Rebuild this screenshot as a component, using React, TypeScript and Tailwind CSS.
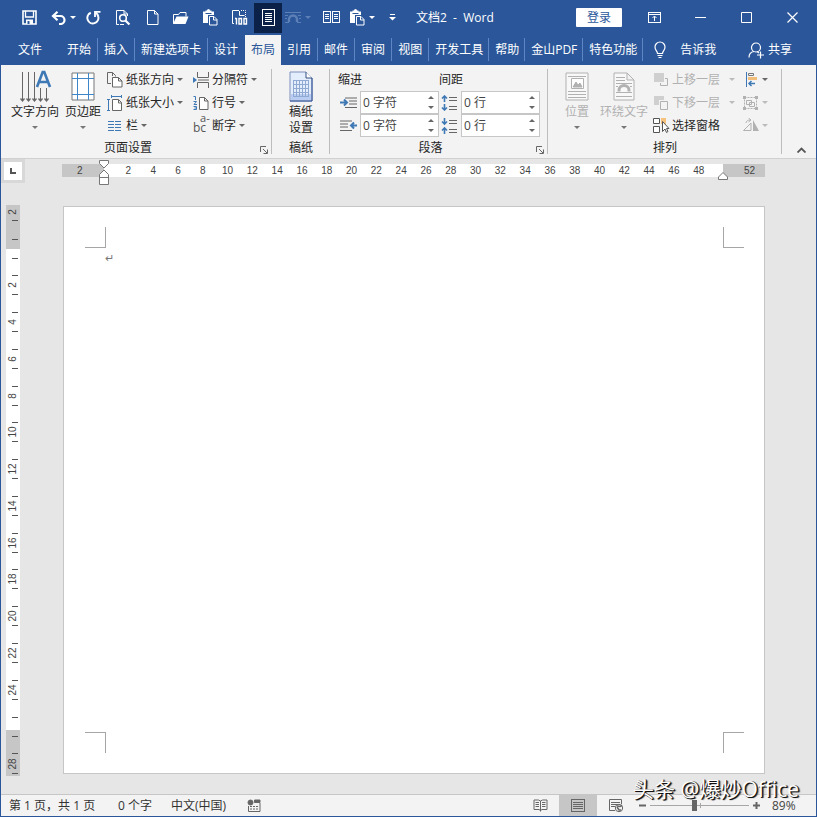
import React from "react";
import clsx from "clsx";

type Tab = { name: string; tight?: boolean; active?: boolean };

const TABS: Tab[] = [
  { name: "开始" },
  { name: "插入" },
  { name: "新建选项卡" },
  { name: "设计" },
  { name: "布局", active: true },
  { name: "引用" },
  { name: "邮件" },
  { name: "审阅" },
  { name: "视图" },
  { name: "开发工具", tight: true },
  { name: "帮助", tight: true },
  { name: "金山PDF", tight: true },
  { name: "特色功能", tight: true },
];

const H_NUMBERS = Array.from({ length: 24 }, (_, i) => (i + 1) * 2);
const V_NUMBERS = Array.from({ length: 12 }, (_, i) => (i + 1) * 2);

type IconProps = { w: number; h: number; className?: string; children: React.ReactNode };

const Icon = ({ w, h, className, children }: IconProps) => (
  <svg
    width={w}
    height={h}
    viewBox={`0 0 ${w} ${h}`}
    fill="none"
    stroke="currentColor"
    className={clsx("shrink-0", className)}
    aria-hidden="true"
  >
    {children}
  </svg>
);

const Caret = ({ className }: { className?: string }) => (
  <Icon w={6} h={3} className={className}>
    <path d="M0 0h6L3 3z" fill="currentColor" stroke="none" />
  </Icon>
);

/* ---------- quick access icons ---------- */

const SaveIcon = () => (
  <Icon w={15} h={15}>
    <path d="M1 1h13v13H1z" strokeWidth="1.6" />
    <path d="M3.500 1v6h8V1" strokeWidth="1.3" />
    <path d="M4 9.500h7V14H4z" fill="currentColor" stroke="none" />
    <path d="M5.500 11h2v3h-2z" fill="#2b579a" stroke="none" />
  </Icon>
);

const UndoIcon = () => (
  <Icon w={15} h={14}>
    <path d="M2 5h7.500a4 4 0 0 1 0 8H8" strokeWidth="2.200" />
    <path d="M6.500 .8L2 5l4.500 4.200" strokeWidth="2.200" />
  </Icon>
);

const RedoIcon = () => (
  <Icon w={15} h={15}>
    <path d="M4.800 2.800A5.500 5.500 0 1 0 12.200 6.500C12 5 11 3.500 9.500 2.500" strokeWidth="2" />
    <path d="M9 7V1.800h5.500" strokeWidth="1.800" />
  </Icon>
);

const PreviewIcon = () => (
  <Icon w={16} h={17}>
    <path d="M4 15.500H1.500V1.500H9l3.500 3.500v2M9 1.500V5h3.500M5 15.500h4" />
    <circle cx="8" cy="9" r="3.300" strokeWidth="1.600" />
    <path d="M10.400 11.500l4 4" strokeWidth="2.200" />
  </Icon>
);

const NewIcon = () => (
  <Icon w={12} h={15}>
    <path d="M.5.500h7l3.500 3.500v10.500H.500zM7.500.500V4H11" />
  </Icon>
);

const OpenIcon = () => (
  <Icon w={17} h={14}>
    <path d="M1.500 12.500V3.500h5l1.500-2h6v4" />
    <path d="M4.500 5.500H16.500L13.500 13H1z" fill="currentColor" stroke="none" />
  </Icon>
);

const PasteIcon = () => (
  <Icon w={16} h={17}>
    <path d="M1 2.500h2.500V1.500H5a1.500 1.500 0 0 1 3 0h1.500v1H12V6H6v8H1z" fill="currentColor" stroke="none" />
    <path d="M3.500 4.500h6" stroke="#2b579a" />
    <path d="M7.500 7.500h4.500l3 3v5.500H7.500zM11.500 7.500V11H15" />
  </Icon>
);

const HundredIcon = () => (
  <Icon w={17} h={17}>
    <path d="M3 14.500H1.500V1.500H8M8.500 2v4.500h5" />
    <path d="M10 1.500h4.500V8" strokeDasharray="1 1" />
    <path d="M5.500 9v6.500M4 9.500h1.500M8 9.500h2.500v5.500H8zM13 9.500h2.500v5.500H13z" strokeWidth="1.400" />
  </Icon>
);

const PageLinesIcon = () => (
  <Icon w={13} h={17}>
    <path d="M.5.500h12v16H.500zM3 4.500h7M3 6.500h7M3 8.500h7M3 10.500h7M3 12.500h7" shapeRendering="crispEdges" />
  </Icon>
);

const WrapSmallIcon = () => (
  <Icon w={16} h={13}>
    <path d="M0 1.500h16M0 4.500h3M13 4.500h3M0 7.500h2M14 7.500h2M0 11.500h4M12 11.500h4" />
    <path d="M4 11V8.500a4 4 0 0 1 8 0V11" strokeWidth="2.400" />
  </Icon>
);

const BookIcon = () => (
  <Icon w={17} h={13}>
    <path d="M.5.500h7v11H.500zM9.500.500h7v11h-7zM2 3.500h4M2 5.500h4M2 7.500h4M11 3.500h4M11 5.500h4M11 7.500h4" shapeRendering="crispEdges" />
  </Icon>
);

/* ---------- ribbon icons ---------- */

const TextDirectionIcon = () => (
  <Icon w={33} h={33} className="text-[#666]">
    <path d="M3.500 2v29M9.500 2v29M15.500 2v29M21.500 18v13M27.500 18v13" />
    <path d="M1.500 28.500l2 2.500 2-2.500M7.500 28.500l2 2.500 2-2.500M13.500 28.500l2 2.500 2-2.500M19.500 28.500l2 2.500 2-2.500M25.500 28.500l2 2.500 2-2.500" strokeWidth="1.300" />
    <path d="M18 17L23.700 2h1.600L31 17M20.500 12h8.500" stroke="#3e78b5" strokeWidth="2.600" />
  </Icon>
);

const MarginsIcon = () => (
  <Icon w={24} h={29}>
    <path d="M1 1h22v27H1z" fill="#fff" stroke="#777" />
    <path d="M6.500 1v27M17.500 1v27M1 6.500h22M1 22.500h22" stroke="#3e86c8" shapeRendering="crispEdges" />
  </Icon>
);

const OrientationIcon = () => (
  <Icon w={16} h={16} className="text-[#666]">
    <path d="M.5.500h5l3 3v1M5.500.500V4M.5.500v11H4" />
    <path d="M5.500 5.500h6l3.500 3.500v6H5.500zM11.500 5.500V9H15" fill="#fff" />
  </Icon>
);

const SizeIcon = () => (
  <Icon w={16} h={16} className="text-[#666]">
    <path d="M5.500 4.500h6l3 3v8h-9zM11.500 4.500V8h3" fill="#fff" />
    <path d="M4 1.500h11M4.500 0v3M14.500 0v3M1.500 4v11.500M0 4.500h3M0 15.500h3" stroke="#3e78b5" />
  </Icon>
);

const ColumnsIcon = () => (
  <Icon w={15} h={12} className="text-[#3e78b5]">
    <path d="M1 1.500h6M1 4.500h6M1 7.500h6M1 10.500h6M8 1.500h6M8 4.500h6M8 7.500h6M8 10.500h6" shapeRendering="crispEdges" />
  </Icon>
);

const BreaksIcon = () => (
  <Icon w={17} h={16} className="text-[#666]">
    <path d="M4.500 0v5.500h11V0M4.500 16v-5.500h11V16M5 8h11" />
    <path d="M0 5l4 3-4 3z" fill="#3e78b5" stroke="none" />
  </Icon>
);

const LineNumberIcon = () => (
  <Icon w={17} h={16} className="text-[#666]">
    <path d="M6.500 2.500h5l3.500 3.500v8.500H6.500zM11.500 2.500V6H15" fill="#fff" />
    <path d="M.5 1.500h2V5M.5 6.500h3L1 9.500h3M.5 11.500h3v3h-3M1.500 13h2" stroke="#3e78b5" />
  </Icon>
);

const HyphenIcon = () => (
  <span className="flex w-[17px] text-[12px] leading-[16px] text-[#555]" aria-hidden="true">
    <span className="mt-1">bc</span>
    <span className="-mt-1 -ml-[6px] h-3 text-[11px] leading-3">a-</span>
  </span>
);

const GridPaperIcon = () => (
  <Icon w={24} h={31}>
    <path d="M1 1h16l6 6v23H1z" fill="#e4edfb" stroke="#7d8fbb" />
    <path d="M2 23h20v6H2z" fill="#b9cdf2" stroke="none" />
    <path d="M17 1v6h6" fill="#fff" stroke="#34517f" />
    <path d="M4 9.500h16M4 13.500h16M4 17.500h16M4 21.500h16M4 25.500h16M4.500 9v17M7.500 9v17M10.500 9v17M13.500 9v17M16.500 9v17M19.500 9v17" stroke="#8fa9d2" shapeRendering="crispEdges" />
    <path d="M23 7v23H1" stroke="#2f4f96" />
  </Icon>
);

const IndentLeftIcon = () => (
  <Icon w={17} h={12} className="text-[#666]">
    <path d="M5 1h12M9 4h8M9 7h8M5 10.500h12" />
    <path d="M0 5.500h7M4 2.500l3 3-3 3" stroke="#3e78b5" strokeWidth="2" />
  </Icon>
);

const IndentRightIcon = () => (
  <Icon w={17} h={12} className="text-[#666]">
    <path d="M0 1h12M0 4h8M0 7h8M0 10.500h12" />
    <path d="M17 5.500h-6M14 2.500l-3 3 3 3" stroke="#3e78b5" strokeWidth="2" />
  </Icon>
);

const SpaceBeforeIcon = () => (
  <Icon w={17} h={16} className="text-[#666]">
    <path d="M8 2.500h8M8 5.500h8M8 11.500h8M8 14.500h8" />
    <path d="M3.500 7V1M1 3.500L3.500 1 6 3.500M3.500 9v6M1 12.500L3.500 15 6 12.500" stroke="#3e78b5" strokeWidth="1.600" />
  </Icon>
);

const SpaceAfterIcon = () => (
  <Icon w={17} h={16} className="text-[#666]">
    <path d="M8 2.500h8M8 5.500h8M8 11.500h8M8 14.500h8" />
    <path d="M3.500 0v6M1 3.500L3.500 6 6 3.500M3.500 16v-6M1 12.500L3.500 10 6 12.500" stroke="#3e78b5" strokeWidth="1.600" />
  </Icon>
);

const PositionIcon = () => (
  <Icon w={24} h={29}>
    <path d="M1 1h22v27H1z" fill="#f8f8f8" />
    <path d="M3 4.500h18M3 19.500h18M3 22.500h18M3 25.500h18" shapeRendering="crispEdges" />
    <path d="M6.500 6.500h12v10h-12z" fill="#fff" />
    <path d="M8 15l3-5 2 3 2-2 2 4z" fill="currentColor" />
  </Icon>
);

const WrapTextIcon = () => (
  <Icon w={22} h={29}>
    <path d="M1 1h13l7 7v20H1zM14 1v7h7" fill="#f8f8f8" />
    <path d="M3 5.500h9M3 8.500h9M3 11.500h16M3 14.500h2M17 14.500h2M3 20.500h16M3 24.500h16" shapeRendering="crispEdges" />
    <path d="M6 19.500V18a5 4.500 0 0 1 10 0v1.500" strokeWidth="3" />
  </Icon>
);

const ForwardIcon = () => (
  <Icon w={16} h={16}>
    <path d="M1 1h10v9H1z" fill="#cfcfcf" stroke="none" />
    <path d="M12 6.500h2.500v7h-7V11" />
  </Icon>
);

const BackwardIcon = () => (
  <Icon w={16} h={16}>
    <path d="M1 1h10v4H6v5H1z" fill="#cfcfcf" stroke="none" />
    <path d="M7.500 6.500h7v8h-7z" />
  </Icon>
);

const SelectPaneIcon = () => (
  <Icon w={17} h={17} className="text-[#555]">
    <path d="M.5 1.500h6v5h-6zM.5 9.500h6v6h-6z" fill="#fff" />
    <path d="M8 1h5v6H8z" fill="#f5c27e" stroke="none" />
    <path d="M9.500 4.500v10l2.500-2.500 1.500 3.500 1.500-1-1.500-3h2.500z" fill="#fff" />
  </Icon>
);

const AlignIcon = () => (
  <Icon w={17} h={15}>
    <path d="M4.500 0v15" stroke="#3e78b5" />
    <path d="M6.500 1.500h5v2h-5z" stroke="#777" />
    <path d="M6 5h9v3H6z" fill="#f2bd79" stroke="none" />
    <path d="M13 11.500H7M9.500 9L7 11.500 9.500 14" stroke="#3e78b5" strokeWidth="1.500" />
  </Icon>
);

const GroupIcon = () => (
  <Icon w={17} h={16}>
    <path d="M2.500 2.500h12v11h-12z" strokeDasharray="2 1" />
    <path d="M4.500 5.500h5v4h-5zM7.500 7.500h5v4h-5z" />
    <path d="M1 1h3v3H1zM13 1h3v3h-3zM1 12h3v3H1zM13 12h3v3h-3z" fill="currentColor" stroke="none" />
  </Icon>
);

const RotateIcon = () => (
  <Icon w={17} h={15}>
    <path d="M1.500 12.500h7.500V5z" />
    <path d="M11 2v11h6z" fill="currentColor" stroke="none" />
    <path d="M4 5c0-2 2-3 4-3M6.500 0L9 2 6.500 4" />
  </Icon>
);

const LauncherIcon = () => (
  <Icon w={8} h={8} className="text-[#666]">
    <path d="M.5 6V.500H6M3 3l4 4M7.500 3.500v4h-4" />
  </Icon>
);

/* ---------- building blocks ---------- */

const QatButton = ({ label, className, children }: { label: string; className: string; children: React.ReactNode }) => (
  <button type="button" aria-label={label} className={clsx("flex h-[30px] shrink-0 items-center justify-center", className)}>
    {children}
  </button>
);

const Group = ({ label, launcher, className, children }: { label: string; launcher?: boolean; className: string; children: React.ReactNode }) => (
  <section aria-label={label} className={clsx("relative flex shrink-0 flex-col pt-[3px]", className)}>
    <div className="flex h-[70px]">{children}</div>
    <div className="flex h-5 items-center">
      <span className="flex-1 text-center">{label}</span>
      {launcher && (
        <button type="button" aria-label={`${label}选项`} className="flex w-[17px] justify-center pt-1">
          <LauncherIcon />
        </button>
      )}
    </div>
    <span className="absolute top-1 right-0 bottom-1 w-px bg-[#bdbdbd]" />
  </section>
);

const BigButton = ({ icon, lines, className, caret = true }: { icon: React.ReactNode; lines: string[]; className: string; caret?: boolean }) => (
  <button type="button" className={clsx("flex shrink-0 flex-col items-center whitespace-nowrap", className)}>
    <span className="flex h-9 items-center">{icon}</span>
    {lines.map((line) => (
      <span key={line} className="leading-[16px]">
        {line}
      </span>
    ))}
    {caret && <Caret className="mt-[6px] text-[#777]" />}
  </button>
);

const SmallButton = ({ icon, label, disabled, caret = true }: { icon: React.ReactNode; label?: string; disabled?: boolean; caret?: boolean }) => (
  <button
    type="button"
    disabled={disabled}
    className={clsx("flex h-[23px] items-center whitespace-nowrap", disabled && "text-[#b1b1b1]")}
  >
    <span className="flex w-[19px] shrink-0 justify-start">{icon}</span>
    {label}
    {caret && <Caret className={clsx(label ? "ml-[3px]" : "ml-px", disabled ? "text-[#bbb]" : "text-[#666]")} />}
  </button>
);

const Spinner = ({ id, label, value, icon }: { id: string; label: string; value: string; icon: React.ReactNode }) => (
  <div className="flex h-[23px] items-center">
    <label htmlFor={id} aria-label={label} className="flex w-5 shrink-0">
      {icon}
    </label>
    <div className="flex h-[23px] w-[79px] border border-[#c6c6c6] bg-white">
      <input id={id} defaultValue={value} className="w-0 flex-1 pl-[2px] text-[#444] outline-none" />
      <span className="flex w-[15px] flex-col items-center justify-around text-[#666]">
        <button type="button" aria-label={`${label}增加`} className="flex h-2 items-center">
          <Caret className="rotate-180" />
        </button>
        <button type="button" aria-label={`${label}减少`} className="flex h-2 items-center">
          <Caret />
        </button>
      </span>
    </div>
  </div>
);

const Tick = () => <span className="block h-px w-[6px] bg-[#555]" />;

const VNumber = ({ n }: { n: number }) => (
  <span className="flex h-3 w-3 items-center justify-center">
    <span className="-rotate-90">{n}</span>
  </span>
);

const TitleBar = () => (
  <header className="flex h-[35px] items-center pl-[14px] text-white">
    <QatButton label="保存" className="w-7"><SaveIcon /></QatButton>
    <QatButton label="撤消" className="w-9 gap-1 pl-1"><UndoIcon /><Caret /></QatButton>
    <QatButton label="重复" className="w-7"><RedoIcon /></QatButton>
    <QatButton label="打印预览" className="w-8"><PreviewIcon /></QatButton>
    <QatButton label="新建" className="w-[27px]"><NewIcon /></QatButton>
    <QatButton label="打开" className="w-[29px]"><OpenIcon /></QatButton>
    <QatButton label="粘贴" className="w-[30px]"><PasteIcon /></QatButton>
    <QatButton label="缩放到 100%" className="w-7"><HundredIcon /></QatButton>
    <QatButton label="页面视图" className="ml-px w-7 bg-[#0b2147]"><PageLinesIcon /></QatButton>
    <QatButton label="环绕" className="w-8 gap-1 text-[#5c7fb6]"><WrapSmallIcon /><Caret /></QatButton>
    <QatButton label="多页" className="w-[34px]"><BookIcon /></QatButton>
    <QatButton label="选择性粘贴" className="w-7 gap-1"><PasteIcon /><Caret /></QatButton>
    <QatButton label="自定义快速访问工具栏" className="w-8">
      <Icon w={7} h={7}>
        <path d="M1 .5h5" />
        <path d="M0 3h7L3.500 6.500z" fill="currentColor" stroke="none" />
      </Icon>
    </QatButton>
    <h1 className="ml-2 text-[12px] whitespace-pre">文档2  -  Word</h1>
    <div className="ml-auto flex items-center pr-px">
      <button type="button" className="mr-[9px] h-[19px] w-[46px] rounded-[1px] bg-white leading-[19px] text-[#2b579a]">登录</button>
      <QatButton label="功能区显示选项" className="w-[46px]">
        <Icon w={13} h={11}>
          <path d="M.5.500h12v10H.500zM.5 2.500h12" shapeRendering="crispEdges" />
          <path d="M6.500 9V4.500M4.500 6l2-2 2 2" />
        </Icon>
      </QatButton>
      <QatButton label="最小化" className="w-[46px]">
        <Icon w={11} h={11}><path d="M0 5.500h11" /></Icon>
      </QatButton>
      <QatButton label="最大化" className="w-[46px]">
        <Icon w={11} h={11}><path d="M.5.500h10v10H.500z" /></Icon>
      </QatButton>
      <QatButton label="关闭" className="w-[46px]">
        <Icon w={11} h={11}><path d="M.5.500l10 10M10.500.500l-10 10" strokeWidth="1.200" /></Icon>
      </QatButton>
    </div>
  </header>
);

const TabBar = () => (
  <nav className="flex h-[30px] items-stretch whitespace-nowrap text-white">
    <button type="button" className="w-[60px] pr-[2px]">文件</button>
    {TABS.map((tab, i) => (
      <button
        key={tab.name}
        type="button"
        className={clsx(
          "relative shrink-0",
          tab.active ? "bg-[#f3f3f3] px-[6px] text-[#2b579a]" : tab.tight ? "px-[6px]" : "pr-[7px] pl-[6px]"
        )}
      >
        {tab.name}
        {!tab.active && TABS[i + 1]?.active !== true && (
          <span className="absolute top-[3px] right-0 bottom-1 w-px bg-[#5f86c4]" />
        )}
      </button>
    ))}
    <button type="button" className="ml-[10px] flex items-center gap-[13px]">
      <Icon w={14} h={18}>
        <path d="M4.500 12.500c0-2.500-2.500-3-2.500-6.500a5 5 0 0 1 10 0c0 3.500-2.500 4-2.500 6.500zM4.500 14.500h5M5.500 16.500h3" strokeWidth="1.200" />
      </Icon>
      告诉我
    </button>
    <button type="button" className="mr-6 ml-auto flex items-center gap-[3px]">
      <Icon w={17} h={17}>
        <circle cx="8" cy="5.500" r="4.500" strokeWidth="1.200" />
        <path d="M1 15.500c0-3.500 2-5.500 5-6M9 9.500l2 1.500M12.500 9.500v7M9 13h7" strokeWidth="1.200" />
      </Icon>
      共享
    </button>
  </nav>
);

const Ribbon = () => (
  <div className="flex h-[94px] border-b border-[#d0d0d0] bg-[#f3f3f3] text-[#262626]">
    <Group label="页面设置" launcher className="w-[271px]">
      <BigButton icon={<TextDirectionIcon />} lines={["文字方向"]} className="ml-2 w-[52px]" />
      <BigButton icon={<MarginsIcon />} lines={["页边距"]} className="w-11" />
      <div className="ml-[2px] flex w-[86px] flex-col">
        <SmallButton icon={<OrientationIcon />} label="纸张方向" />
        <SmallButton icon={<SizeIcon />} label="纸张大小" />
        <SmallButton icon={<ColumnsIcon />} label="栏" />
      </div>
      <div className="flex flex-col">
        <SmallButton icon={<BreaksIcon />} label="分隔符" />
        <SmallButton icon={<LineNumberIcon />} label="行号" />
        <SmallButton icon={<HyphenIcon />} label="断字" />
      </div>
    </Group>

    <Group label="稿纸" className="w-[58px]">
      <BigButton icon={<GridPaperIcon />} lines={["稿纸", "设置"]} className="mx-auto" caret={false} />
    </Group>

    <Group label="段落" launcher className="w-[218px]">
      <div className="ml-[10px] flex w-[101px] flex-col">
        <span className="-ml-[2px] flex h-[23px] items-center">缩进</span>
        <Spinner id="indent-left" label="左缩进" value="0 字符" icon={<IndentLeftIcon />} />
        <Spinner id="indent-right" label="右缩进" value="0 字符" icon={<IndentRightIcon />} />
      </div>
      <div className="flex flex-col">
        <span className="-ml-[2px] flex h-[23px] items-center">间距</span>
        <Spinner id="space-before" label="段前间距" value="0 行" icon={<SpaceBeforeIcon />} />
        <Spinner id="space-after" label="段后间距" value="0 行" icon={<SpaceAfterIcon />} />
      </div>
    </Group>

    <Group label="排列" className="w-[234px]">
      <BigButton icon={<PositionIcon />} lines={["位置"]} className="ml-[7px] w-11 text-[#b1b1b1]" />
      <BigButton icon={<WrapTextIcon />} lines={["环绕文字"]} className="w-[50px] text-[#b1b1b1]" />
      <div className="ml-1 flex w-[93px] flex-col">
        {[
          { label: "上移一层", icon: <ForwardIcon /> },
          { label: "下移一层", icon: <BackwardIcon /> },
        ].map((item) => (
          <div key={item.label} className="flex items-center gap-[9px]">
            <SmallButton icon={item.icon} label={item.label} disabled caret={false} />
            <Caret className="text-[#bbb]" />
          </div>
        ))}
        <SmallButton icon={<SelectPaneIcon />} label="选择窗格" caret={false} />
      </div>
      <div className="-ml-1 flex flex-col">
        <SmallButton icon={<AlignIcon />} />
        <SmallButton icon={<GroupIcon />} disabled />
        <SmallButton icon={<RotateIcon />} disabled />
      </div>
    </Group>

    <button type="button" aria-label="折叠功能区" className="mr-[10px] mb-[5px] ml-auto self-end">
      <Icon w={9} h={6} className="text-[#555]">
        <path d="M.5 5.500l4-4 4 4" strokeWidth="1.800" />
      </Icon>
    </button>
  </div>
);

const HorizontalRuler = () => (
  <div className="flex h-6 items-start">
    <button type="button" aria-label="制表符" className="flex h-6 w-6 items-center justify-center border-[3px] border-[#d8d8d8] bg-white">
      <Icon w={6} h={6} className="text-[#555]">
        <path d="M1 0v5h5" strokeWidth="2" />
      </Icon>
    </button>
    <div className="mt-[5px] mr-[51px] ml-[37px] flex h-[13px] flex-1 font-['Liberation_Sans',sans-serif] text-[10px] leading-[13px] text-[#444]">
      <div className="relative w-[42px] bg-[#c6c6c6] pl-[15px]">
        2
        <Icon w={10} h={25} className="absolute -top-[4px] -right-[5px] z-10 text-[#777]">
          <path d="M.5.500h9v3L5 8 .5 3.500zM5 10l4.500 4.500v10h-9v-10zM.5 17.500h9" fill="#fff" />
        </Icon>
      </div>
      <div className="flex flex-1 bg-white px-3">
        {H_NUMBERS.map((n) => (
          <span key={n} className="w-0 flex-1 text-center">
            {n}
          </span>
        ))}
      </div>
      <div className="relative w-[42px] bg-[#c6c6c6] pr-[10px] text-right">
        52
        <Icon w={10} h={8} className="absolute top-2 -left-[5px] text-[#777]">
          <path d="M5 .5L9.500 5v2.500h-9V5z" fill="#fff" />
        </Icon>
      </div>
    </div>
  </div>
);

const VerticalRuler = () => (
  <div className="ml-[5px] flex w-[14px] flex-col font-['Liberation_Sans',sans-serif] text-[10px] leading-3 text-[#444]">
    <div className="flex h-11 flex-col items-center bg-[#c6c6c6] pt-px">
      <VNumber n={2} />
      <span className="mt-[2px] pl-1"><Tick /></span>
      <span className="mt-[18px] pl-1"><Tick /></span>
    </div>
    <div className="flex flex-1 flex-col items-center bg-white">
      <span className="flex h-[18px] items-center pl-1"><Tick /></span>
      {V_NUMBERS.map((n) => (
        <div key={n} className="flex flex-1 flex-col items-center justify-center gap-[2px]">
          <span className="pl-1"><Tick /></span>
          <span className="flex h-[14px] items-center"><VNumber n={n} /></span>
          <span className="pl-1"><Tick /></span>
        </div>
      ))}
      <span className="flex h-[22px] items-center pb-1 pl-1"><Tick /></span>
    </div>
    <div className="flex h-[46px] flex-col items-center bg-[#c6c6c6] pt-[6px]">
      <span className="pl-1"><Tick /></span>
      <span className="mt-4 pl-1"><Tick /></span>
      <span className="mt-1"><VNumber n={28} /></span>
      <span className="mt-[3px] pl-1"><Tick /></span>
    </div>
  </div>
);

const PageSheet = () => (
  <main className="mt-px mr-[51px] mb-[2px] ml-[43px] flex flex-1 flex-col border border-[#c6c6c6] bg-white py-5 pr-5 pl-[21px]">
    <div className="flex justify-between">
      <span className="h-[21px] w-[21px] border-r border-b border-[#a6a6a6]" />
      <span className="h-[21px] w-[21px] border-b border-l border-[#a6a6a6]" />
    </div>
    <p className="flex-1 px-5 pt-[2px] text-[11px] text-[#777]">↵</p>
    <div className="flex justify-between">
      <span className="h-[21px] w-[21px] border-t border-r border-[#a6a6a6]" />
      <span className="h-[21px] w-[21px] border-t border-l border-[#a6a6a6]" />
    </div>
  </main>
);

const StatusBar = () => (
  <footer className="relative flex h-[22px] items-center border-t border-[#c6c6c6] bg-[#f3f3f3] pl-2 whitespace-pre text-[#333]">
    <span className="w-[109px]">第 1 页，共 1 页</span>
    <span className="w-[53px]">0 个字</span>
    <span className="w-[76px]">中文(中国)</span>
    <Icon w={14} h={13} className="text-[#666]">
      <circle cx="3.500" cy="3.500" r="2.500" fill="currentColor" />
      <path d="M7.500 1h5.500v2.500H7.500z" fill="currentColor" />
      <path d="M1.500 7v5.500h11.500V4M3 7.500h2M6 7.500h2M9 7.500h2M3 10h2M6 10h2M9 10h2" />
    </Icon>
    <div className="ml-auto flex h-full items-center text-[#666]">
      <button type="button" aria-label="阅读视图" className="flex h-full w-[38px] items-center justify-center">
        <Icon w={15} h={13}>
          <path d="M7.500 2L5.500 1H1v9.500h5l1.500 1 1.500-1h5V1H9.500zM7.500 2v10.500M2.500 3.500H6M2.500 5.500H6M2.500 7.500H6M9 3.500h3.500M9 5.500h3.500M9 7.500h3.500" />
        </Icon>
      </button>
      <button type="button" aria-label="页面视图" className="flex h-full w-[38px] items-center justify-center bg-[#c6c6c6]">
        <Icon w={14} h={13}>
          <path d="M.5.500h13v12H.500zM2 3.500h10M2 5.500h10M2 7.500h10M2 9.500h10" shapeRendering="crispEdges" />
        </Icon>
      </button>
      <button type="button" aria-label="Web 版式视图" className="flex h-full w-[38px] items-center justify-center">
        <Icon w={15} h={14}>
          <path d="M6 11.500H.500V.500h12V5M2 3.500h9M2 5.500h7M2 7.500h4" />
          <circle cx="10" cy="9" r="3.700" />
          <path d="M8 7l3 .5 2-1M8 8l2 3h2" strokeWidth="1.600" />
        </Icon>
      </button>
      <button type="button" aria-label="缩小" className="ml-1 flex w-[7px] justify-center">
        <Icon w={7} h={7}><path d="M0 3.500h7" strokeWidth="2" /></Icon>
      </button>
      <div className="relative mx-1 flex w-[99px] items-center">
        <input
          type="range"
          aria-label="显示比例"
          defaultValue={45}
          className="h-[11px] w-full appearance-none bg-[linear-gradient(#a6a6a6,#a6a6a6)] bg-[length:100%_1px] bg-center bg-no-repeat [&::-webkit-slider-thumb]:h-[11px] [&::-webkit-slider-thumb]:w-[5px] [&::-webkit-slider-thumb]:appearance-none [&::-webkit-slider-thumb]:bg-[#666]"
        />
        <span className="absolute left-1/2 h-[5px] w-px bg-[#a6a6a6]" />
      </div>
      <button type="button" aria-label="放大" className="flex w-[7px] justify-center">
        <Icon w={7} h={7}><path d="M0 3.500h7M3.500 0v7" strokeWidth="2" /></Icon>
      </button>
      <span className="w-14 pl-3 text-[#444]">89%</span>
    </div>
    <span className="pointer-events-none absolute right-[17px] bottom-[15px] text-[21px] leading-[24px] text-white [text-shadow:1px_1px_0_#111,1px_0_0_#333,2px_1px_1px_#555]">
      头条 @爆炒Office
    </span>
  </footer>
);

export default function App() {
  return (
    <div className="flex min-h-screen flex-col border-x border-b border-[#2b579a] bg-[#e6e6e6] font-['Open_Sans','Noto_Sans_CJK_SC',sans-serif] text-[12px] leading-[16px]">
      <div className="bg-[#2b579a]">
        <TitleBar />
        <TabBar />
      </div>
      <Ribbon />
      <HorizontalRuler />
      <div className="mt-[22px] mb-[18px] flex flex-1">
        <VerticalRuler />
        <PageSheet />
      </div>
      <StatusBar />
    </div>
  );
}
